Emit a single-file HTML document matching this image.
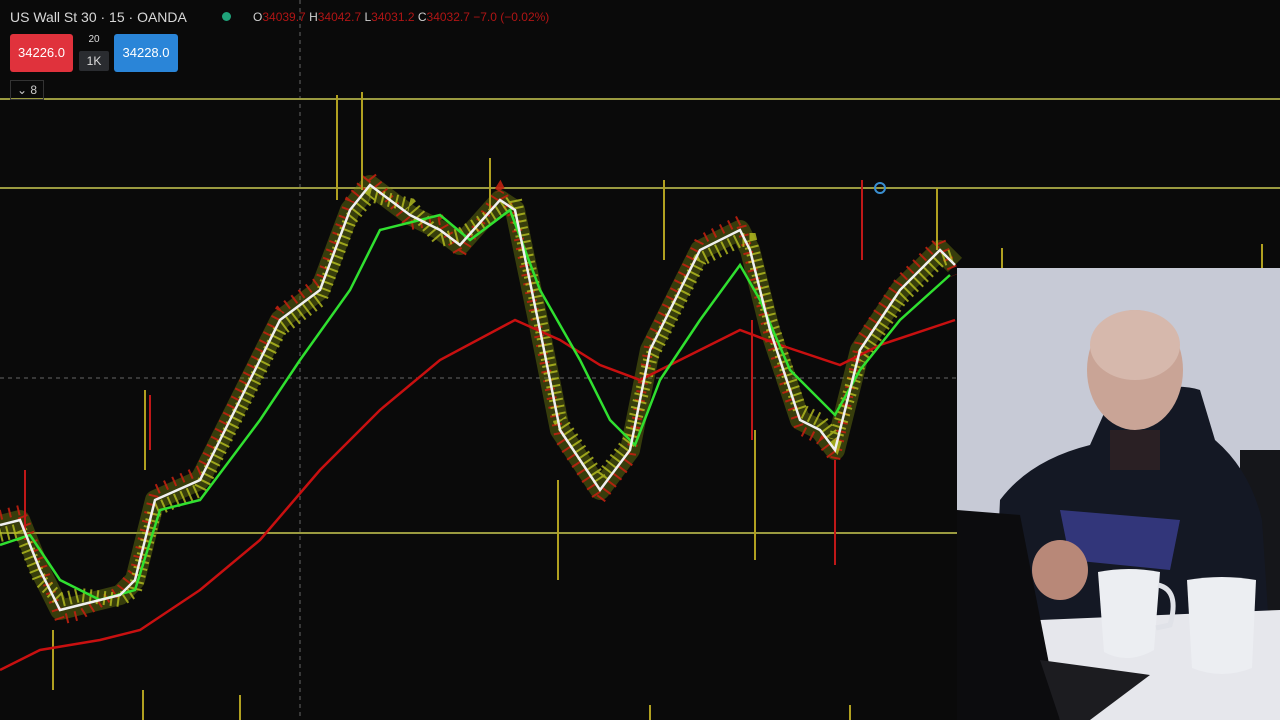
<!DOCTYPE html>
<html><head><meta charset="utf-8"><style>
html,body{margin:0;padding:0;background:#0a0a0a;width:1280px;height:720px;overflow:hidden;font-family:"Liberation Sans",sans-serif}
.hd{position:absolute;left:10px;top:9px;color:#d8d8d8;font-size:14px}
.ohlc{position:absolute;left:253px;top:10px;font-size:12px;color:#d0d0d0}
.ohlc span{color:#b01515}
.btn{position:absolute;top:34px;height:38px;border-radius:3px;color:#fff;font-size:13px;line-height:38px;text-align:center}
</style></head><body>
<svg width="1280" height="720" style="position:absolute;left:0;top:0">
<rect width="1280" height="720" fill="#0a0a0a"/>
<line x1="300" y1="0" x2="300" y2="720" stroke="#666" stroke-dasharray="4,4"/>
<line x1="0" y1="378" x2="957" y2="378" stroke="#666" stroke-dasharray="4,4"/>
<line x1="0" y1="99" x2="1280" y2="99" stroke="#9a9a40" stroke-width="2"/>
<line x1="0" y1="188" x2="1280" y2="188" stroke="#9a9a40" stroke-width="2"/>
<line x1="0" y1="533" x2="957" y2="533" stroke="#9a9a40" stroke-width="2"/>
<circle cx="880" cy="188" r="5" fill="none" stroke="#3a8fd0" stroke-width="2"/>
<polyline fill="none" stroke="#7a8a10" stroke-width="20" opacity="0.4" stroke-linejoin="round" points="0,525 20,520 40,570 60,610 80,605 120,595 135,580 155,500 200,480 240,400 280,320 320,290 350,210 370,185 410,215 440,230 460,245 500,200 515,210 540,330 560,430 600,490 630,450 650,350 700,250 740,230 750,250 770,330 800,420 820,430 835,450 860,350 900,290 940,250 955,265"/>
<polyline fill="none" stroke="#c02010" stroke-width="10" stroke-dasharray="2,7" opacity="0.9" points="0,515 20,510 40,560 60,620 80,615 120,590 135,570 155,490 200,470 240,390 280,310 320,280 350,200 370,175 410,225 440,220 460,255 500,190 515,220 540,340 560,440 600,500 630,460 650,340 700,240 740,220 750,260 770,340 800,430 820,440 835,460 860,340 900,280 940,240 955,275"/>
<polyline fill="none" stroke="#b8c020" stroke-width="14" stroke-dasharray="2,5" opacity="0.8" points="0,535 20,530 40,580 60,600 80,595 120,600 135,590 155,510 200,490 240,410 280,330 320,300 350,220 370,195 410,205 440,240 460,235 500,210 515,200 540,320 560,420 600,480 630,440 650,360 700,260 740,240 750,240 770,320 800,410 820,420 835,440 860,360 900,300 940,260 955,255"/>
<g stroke="#b0a020" stroke-width="2">
<line x1="337" y1="95" x2="337" y2="200"/><line x1="362" y1="92" x2="362" y2="190"/><line x1="490" y1="158" x2="490" y2="210"/><line x1="664" y1="180" x2="664" y2="260"/><line x1="937" y1="188" x2="937" y2="250"/><line x1="1002" y1="248" x2="1002" y2="268"/><line x1="1262" y1="244" x2="1262" y2="268"/><line x1="755" y1="430" x2="755" y2="560"/><line x1="558" y1="480" x2="558" y2="580"/><line x1="145" y1="390" x2="145" y2="470"/><line x1="53" y1="630" x2="53" y2="690"/><line x1="143" y1="690" x2="143" y2="720"/><line x1="240" y1="695" x2="240" y2="720"/><line x1="650" y1="705" x2="650" y2="720"/><line x1="850" y1="705" x2="850" y2="720"/>
</g>
<g stroke="#c01818" stroke-width="2">
<line x1="835" y1="460" x2="835" y2="565"/><line x1="752" y1="320" x2="752" y2="440"/><line x1="862" y1="180" x2="862" y2="260"/><line x1="25" y1="470" x2="25" y2="540"/><line x1="150" y1="395" x2="150" y2="450"/>
</g>
<polyline fill="none" stroke="#c81010" stroke-width="2.5" points="0,670 40,650 100,640 140,630 200,590 260,540 320,470 380,410 440,360 515,320 560,340 600,365 640,380 700,350 740,330 780,345 840,365 880,345 955,320"/>
<polyline fill="none" stroke="#30e030" stroke-width="2.5" points="0,545 30,535 60,580 100,600 135,590 160,510 200,500 260,420 300,360 350,290 380,230 440,215 470,240 510,210 540,290 580,360 610,420 635,445 660,380 700,320 740,265 760,300 790,370 835,415 860,370 900,320 950,275"/>
<polyline fill="none" stroke="#f0f0f0" stroke-width="2.5" points="0,525 20,520 40,570 60,610 80,605 120,595 135,580 155,500 200,480 240,400 280,320 320,290 350,210 370,185 410,215 440,230 460,245 500,200 515,210 540,330 560,430 600,490 630,450 650,350 700,250 740,230 750,250 770,330 800,420 820,430 835,450 860,350 900,290 940,250 955,265"/>
<!-- photo -->
<rect x="957" y="268" width="323" height="452" fill="#c7cad6"/>
<rect x="1240" y="450" width="40" height="200" fill="#15161a"/>
<path d="M990,720 L1000,500 Q1030,460 1090,445 L1110,400 Q1170,380 1200,390 L1215,440 Q1250,470 1262,520 L1275,720 Z" fill="#141824"/>
<ellipse cx="1135" cy="370" rx="48" ry="60" fill="#c9a496"/>
<ellipse cx="1135" cy="345" rx="45" ry="35" fill="#d6b8ac"/>
<rect x="1110" y="430" width="50" height="40" fill="#2a2024"/>
<path d="M1060,510 L1180,520 L1170,570 L1070,560 Z" fill="#3a3e90" opacity="0.8"/>
<ellipse cx="1060" cy="570" rx="28" ry="30" fill="#b88878"/>
<path d="M1040,620 L1280,610 L1280,720 L1060,720 Z" fill="#e6e7ec"/>
<path d="M957,510 L1020,515 L1060,720 L957,720 Z" fill="#0c0c0e"/>
<path d="M1040,660 L1150,675 L1090,720 L1060,720 Z" fill="#1c1c20"/>
<path d="M1098,572 Q1128,566 1160,572 L1154,650 Q1128,665 1104,652 Z" fill="#eceef2"/>
<path d="M1158,585 Q1180,590 1170,625 L1156,628" fill="none" stroke="#e0e2e8" stroke-width="5"/>
<path d="M1187,580 Q1222,574 1256,580 L1252,668 Q1222,680 1192,668 Z" fill="#eceef2"/>
</svg>
<div class="hd">US Wall St 30 · 15 · OANDA</div>
<div style="position:absolute;left:222px;top:12px;width:9px;height:9px;border-radius:50%;background:#1fa37a"></div>
<div class="ohlc">O<span>34039.7</span> H<span>34042.7</span> L<span>34031.2</span> C<span>34032.7 −7.0 (−0.02%)</span></div>
<div class="btn" style="left:10px;width:63px;background:#e0323c">34226.0</div>
<div style="position:absolute;left:80px;top:34px;width:28px;color:#ddd;font-size:10px;text-align:center">20</div>
<div style="position:absolute;left:79px;top:51px;width:30px;height:20px;background:#2a2c30;color:#ddd;font-size:12px;line-height:20px;text-align:center;border-radius:2px">1K</div>
<div class="btn" style="left:114px;width:64px;background:#2a85d8">34228.0</div>
<div style="position:absolute;left:10px;top:80px;width:32px;height:18px;border:1px solid #333;color:#ccc;font-size:12px;line-height:18px;text-align:center">⌄ 8</div>
</body></html>
